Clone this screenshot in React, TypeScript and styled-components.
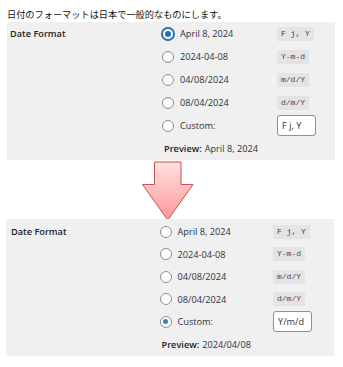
import React from "react";
import styled, { createGlobalStyle } from "styled-components";

const GlobalStyle = createGlobalStyle`
  html, body { margin: 0; padding: 0; background: #ffffff; }
  body { font-family: "Open Sans", "Noto Sans", sans-serif; color: #1d2327; }
`;

const Page = styled.div`
  width: 343px;
  display: flex;
  flex-direction: column;
`;

const Heading = styled.div`
  padding: 8px 7px 2px;
  height: 12px;
  line-height: 12px;
  font-family: "Noto Sans CJK JP", "Noto Sans", sans-serif;
  font-size: 9.2px;
  color: #111;
  white-space: nowrap;
`;

const Panel = styled.section<{ $left: number; $padLeft: number; $padTop: number }>`
  margin-left: ${(p) => p.$left}px;
  width: 328px;
  box-sizing: border-box;
  padding: ${(p) => p.$padTop}px 0 0 ${(p) => p.$padLeft}px;
  background: #f0f0f1;
  display: flex;
  align-items: flex-start;
`;

const FieldLabel = styled.div<{ $w: number; $h: number }>`
  width: ${(p) => p.$w}px;
  flex: none;
  height: ${(p) => p.$h}px;
  display: flex;
  align-items: center;
  font-weight: 600;
  font-size: 9.2px;
  color: #1d2327;
`;

const Options = styled.div`
  display: flex;
  flex-direction: column;
`;

const OptionRow = styled.div<{ $h: number; $choiceW: number }>`
  height: ${(p) => p.$h}px;
  display: grid;
  grid-template-columns: ${(p) => p.$choiceW}px auto;
  align-items: center;
`;

const Choice = styled.div`
  display: flex;
  align-items: center;
  gap: 6px;
  font-size: 9.2px;
  color: #2c3338;
  white-space: nowrap;
`;

const Radio = styled.span<{ $checked?: boolean; $focus?: boolean }>`
  width: 12px;
  height: 12px;
  box-sizing: border-box;
  border-radius: 50%;
  background: #fff;
  border: 1px solid ${(p) => (p.$focus ? "#2271b1" : "#8c8f94")};
  box-shadow: ${(p) => (p.$focus ? "0 0 0 1px #2271b1" : "none")};
  display: flex;
  align-items: center;
  justify-content: center;
  flex: none;
  &::after {
    content: "";
    display: ${(p) => (p.$checked ? "block" : "none")};
    width: ${(p) => (p.$focus ? 6 : 5)}px;
    height: ${(p) => (p.$focus ? 6 : 5)}px;
    border-radius: 50%;
    background: ${(p) => (p.$focus ? "#2271b1" : "#3582c4")};
  }
`;

const Code = styled.code`
  justify-self: start;
  height: 14px;
  line-height: 14px;
  padding: 0 4px;
  background: #e4e4e5;
  font-family: "Liberation Mono", "DejaVu Sans Mono", monospace;
  font-size: 8px;
  color: #3c434a;
  white-space: pre;
`;

const TextInput = styled.input`
  justify-self: start;
  width: 39px;
  height: 21px;
  box-sizing: border-box;
  padding: 0 4px;
  margin: 0;
  border: 1px solid #8c8f94;
  border-radius: 3px;
  background: #fff;
  font-family: "Open Sans", "Noto Sans", sans-serif;
  font-size: 9.2px;
  color: #2c3338;
  outline: none;
`;

const Preview = styled.div<{ $h: number }>`
  height: ${(p) => p.$h}px;
  display: flex;
  align-items: center;
  padding-left: 2px;
  font-size: 9.2px;
  color: #2c3338;
  white-space: nowrap;
  b { font-weight: 600; color: #1d2327; margin-right: 3px; }
`;

const ArrowArea = styled.div`
  height: 59px;
  padding-left: 141px;
  display: flex;
  align-items: flex-start;
`;

const ArrowSvg = styled.svg`
  display: block;
  overflow: visible;
  margin-top: 0.5px;
`;

type Opt = { label: string; code: string };
const options: Opt[] = [
  { label: "April 8, 2024", code: "F j, Y" },
  { label: "2024-04-08", code: "Y-m-d" },
  { label: "04/08/2024", code: "m/d/Y" },
  { label: "08/04/2024", code: "d/m/Y" },
];

type FormatPanelProps = {
  left: number;
  padLeft: number;
  padTop: number;
  labelW: number;
  choiceW: number;
  rowH: number;
  selected: number;
  focus: boolean;
  custom: string;
  preview: string;
};

function FormatPanel(p: FormatPanelProps) {
  return (
    <Panel $left={p.left} $padLeft={p.padLeft} $padTop={p.padTop}>
      <FieldLabel $w={p.labelW} $h={p.rowH}>Date Format</FieldLabel>
      <Options>
        {options.map((o, i) => (
          <OptionRow key={o.code} $h={p.rowH} $choiceW={p.choiceW}>
            <Choice>
              <Radio $checked={p.selected === i} $focus={p.selected === i && p.focus} />
              {o.label}
            </Choice>
            <Code>{o.code}</Code>
          </OptionRow>
        ))}
        <OptionRow $h={p.rowH} $choiceW={p.choiceW}>
          <Choice>
            <Radio $checked={p.selected === 4} $focus={p.selected === 4 && p.focus} />
            Custom:
          </Choice>
          <TextInput readOnly value={p.custom} />
        </OptionRow>
        <Preview $h={p.rowH}>
          <b>Preview:</b>
          {p.preview}
        </Preview>
      </Options>
    </Panel>
  );
}

function DownArrow() {
  return (
    <ArrowSvg width="54" height="61" viewBox="0 0 54 61">
      <defs>
        <linearGradient id="arrowFill" x1="0" y1="0" x2="0" y2="1">
          <stop offset="0" stopColor="#ffe2e2" />
          <stop offset="1" stopColor="#ff9696" />
        </linearGradient>
      </defs>
      <polygon
        points="13.5,1 40,1 40,23.5 52,23.5 26.75,59 1.5,23.5 13.5,23.5"
        fill="url(#arrowFill)"
        stroke="#c9504f"
        strokeWidth="1"
        strokeLinejoin="miter"
      />
    </ArrowSvg>
  );
}

export default function App() {
  return (
    <Page>
      <GlobalStyle />
      <Heading>日付のフォーマットは日本で一般的なものにします。</Heading>
      <FormatPanel
        left={7}
        padLeft={3}
        padTop={0}
        labelW={152}
        choiceW={115}
        rowH={23}
        selected={0}
        focus={true}
        custom="F j, Y"
        preview="April 8, 2024"
      />
      <ArrowArea>
        <DownArrow />
      </ArrowArea>
      <FormatPanel
        left={6}
        padLeft={5}
        padTop={1.5}
        labelW={148.5}
        choiceW={113.5}
        rowH={22.5}
        selected={4}
        focus={false}
        custom="Y/m/d"
        preview="2024/04/08"
      />
    </Page>
  );
}
